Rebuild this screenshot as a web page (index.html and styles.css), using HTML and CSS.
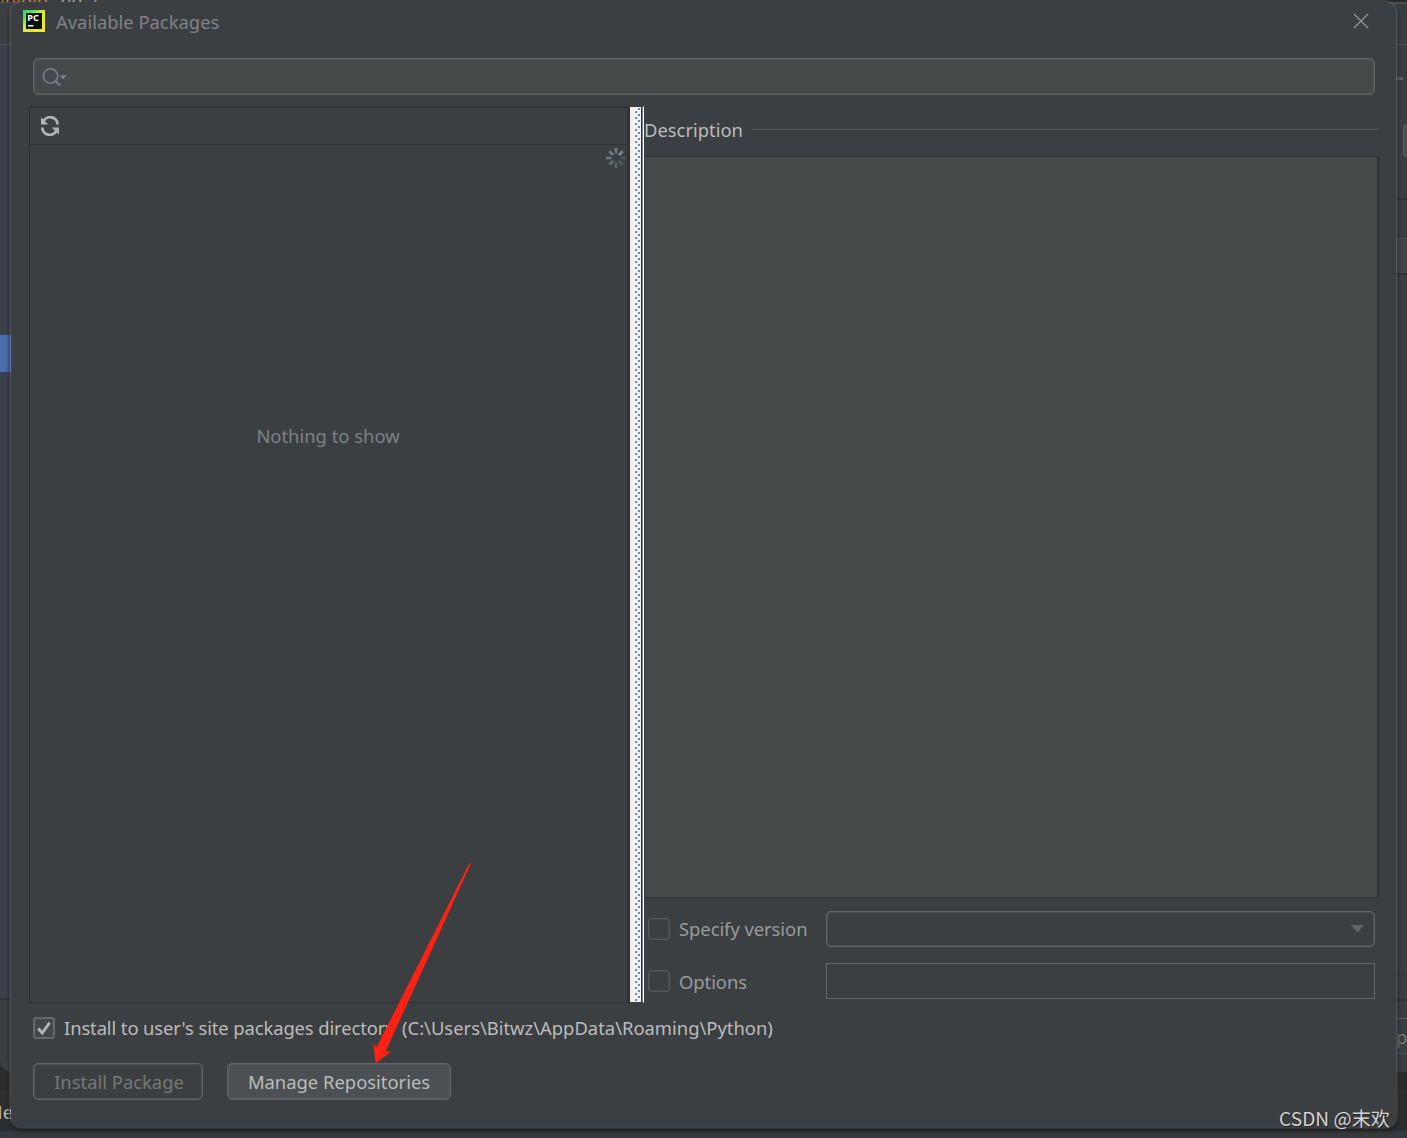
FILE: index.html
```html
<!DOCTYPE html>
<html lang="en">
<head>
    <meta charset="UTF-8">
    <meta name="viewport" content="width=device-width, initial-scale=1.0">
    <title>Available Packages</title>
    <link rel="stylesheet" href="styles.css">
</head>
<body>
    <!-- parent windows, only the edges are visible -->
    <div class="backdrop">
        <div class="back-top"><span class="code">ipipip</span><span class="code2">ng-7</span></div>
        <div class="back-left">
            <div class="tree"><div class="selected"></div></div>
        </div>
        <div class="back-right">
            <div class="seg seg-title"></div>
            <div class="seg seg-form"><i class="dash"></i><i class="stub"></i></div>
            <div class="seg seg-row"></div>
            <div class="seg seg-head"></div>
            <div class="seg seg-list"></div>
            <div class="seg seg-foot"></div>
            <div class="seg seg-apply"><span>p</span></div>
        </div>
        <div class="back-bottom"><span>He</span></div>
    </div>

    <div class="dialog">
        <div class="titlebar">
            <svg class="logo" width="22" height="22" viewBox="0 0 22 22">
                <defs>
                    <linearGradient id="pc" x1="0" y1="0" x2="0.7" y2="0.8">
                        <stop offset="0" stop-color="#21d789"/>
                        <stop offset="0.28" stop-color="#42e94b"/>
                        <stop offset="0.6" stop-color="#d6ec35"/>
                        <stop offset="1" stop-color="#f0e52c"/>
                    </linearGradient>
                </defs>
                <rect width="22" height="22" fill="url(#pc)"/>
                <rect x="3" y="3" width="16" height="16" fill="#07100b"/>
                <text x="4.3" y="11" textLength="11.5" lengthAdjust="spacingAndGlyphs" class="logo-text">PC</text>
                <rect x="5" y="15" width="5.5" height="1.5" fill="#fff"/>
            </svg>
            <span class="title">Available Packages</span>
            <svg class="close" width="16" height="16" viewBox="0 0 16 16"><path d="M1 1L15 15M15 1L1 15" stroke="#929597" stroke-width="1.3"/></svg>
        </div>

        <div class="search">
            <svg width="26" height="20" viewBox="0 0 26 20">
                <circle cx="8.5" cy="8" r="7.2" fill="none" stroke="#79838a" stroke-width="1.5"/>
                <path d="M13.2 12.7L18 17.5" stroke="#79838a" stroke-width="2"/>
                <path d="M17.6 7.3h7l-3.5 4z" fill="#79838a"/>
            </svg>
        </div>

        <div class="main">
            <div class="packages">
                <div class="toolbar">
                    <svg width="20" height="20" viewBox="0 0 20 20">
                        <path d="M3.2 6.2A7.4 7.4 0 0 1 17.6 8.5M16.8 13.8A7.4 7.4 0 0 1 2.4 11.5" fill="none" stroke="#afb1b3" stroke-width="2.9"/>
                        <path d="M1 1.2V8.5H8.3zM19 18.8V11.5H11.7z" fill="#afb1b3"/>
                    </svg>
                </div>
                <div class="list">
                    <svg class="spinner" width="20" height="20" viewBox="-10 -10 20 20" fill="#7f8b91">
                        <rect x="-1.3" y="-10" width="2.6" height="5.5" opacity=".78"/>
                        <rect x="-1.3" y="-9.5" width="2.6" height="5.5" transform="rotate(45)"/>
                        <rect x="-1.3" y="-10" width="2.6" height="5.5" transform="rotate(90)" opacity=".3"/>
                        <rect x="-1.3" y="-9.5" width="2.6" height="5.5" transform="rotate(135)" opacity=".4"/>
                        <rect x="-1.3" y="-10" width="2.6" height="5.5" transform="rotate(180)" opacity=".5"/>
                        <rect x="-1.3" y="-9.5" width="2.6" height="5.5" transform="rotate(225)" opacity=".62"/>
                        <rect x="-1.3" y="-10" width="2.6" height="5.5" transform="rotate(270)" opacity=".75"/>
                        <rect x="-1.3" y="-9.5" width="2.6" height="5.5" transform="rotate(315)" opacity=".8"/>
                    </svg>
                    <span class="empty">Nothing to show</span>
                </div>
            </div>
            <div class="splitter"></div>
            <div class="details">
                <div class="heading"><span>Description</span><div class="line"></div></div>
                <div class="description"></div>
                <div class="option">
                    <div class="check off"></div>
                    <span class="label">Specify version</span>
                    <div class="field combo"><svg width="13" height="8" viewBox="0 0 13 8"><path d="M0 0h13l-6.5 7.5z" fill="#626567"/></svg></div>
                </div>
                <div class="option">
                    <div class="check off"></div>
                    <span class="label opt">Options</span>
                    <div class="field"></div>
                </div>
            </div>
        </div>

        <div class="install">
            <div class="check on">
                <svg width="18" height="18" viewBox="0 0 18 18"><path d="M3.2 9.5L7.3 14L14.6 3.6" fill="none" stroke="#b3b5b6" stroke-width="2.8"/></svg>
            </div>
            <span class="install-a">Install to user's site packages directory</span>
            <span class="install-b">(C:\Users\Bitwz\AppData\Roaming\Python)</span>
        </div>

        <div class="buttons">
            <button class="button disabled" disabled>Install Package</button>
            <button class="button manage">Manage Repositories</button>
        </div>
    </div>

    <svg class="arrow" width="100" height="202" viewBox="0 0 100 202"><path d="M97.3 1.3L4.7 185.3L1.3 181.3L3.7 201.5L19.3 189.3L13.7 189L99 1.6z" fill="#ff2114"/></svg>
    <div class="watermark">CSDN @末欢</div>
</body>
</html>
```
FILE: styles.css
```css
*{
    box-sizing: border-box;
}
body{
    margin: 0;
    width: 1407px;
    height: 1138px;
    position: relative;
    overflow: hidden;
    background-color: #2b2c2d;
    color: #bbbbbb;
    font-family: "Noto Sans", "Open Sans", sans-serif;
    font-size: 18.4px;
    line-height: 24px;
    white-space: nowrap;
}
.backdrop{
    display: grid;
    grid-template-columns: 20px 1fr 20px;
    grid-template-rows: 2px 1070px 66px;
    height: 1138px;
}
.back-top{
    grid-column: 1 / 4;
    overflow: hidden;
    line-height: 2px;
    background-color: #2b2b2b;
}
.code{
    color: #b87436;
}
.code2{
    color: #999;
    margin-left: 12px;
}
.back-left{
    background-color: #3c3f41;
    border-top: 1px solid #505355;
    border-bottom-left-radius: 12px;
    padding-top: 41px;
}
.tree{
    height: 956px;
    background-color: #3c404b;
    border-top: 1px solid #4c5052;
    border-bottom: 2px solid #303234;
    padding-top: 290px;
}
.selected{
    height: 37px;
    background-color: #4b6eaf;
}
.back-right{
    grid-column: 3;
    background-color: #3a3e40;
}
.seg{
    border-bottom: 1px solid #4d5052;
}
.seg-title{
    height: 43px;
    border-top: 2px solid #4d5052;
}
.seg-form{
    height: 155px;
    border-bottom: 2px solid #2f3132;
    padding: 32px 0 0 9px;
}
.dash{
    display: block;
    width: 7px;
    height: 3px;
    background-color: #5c5e60;
}
.stub{
    display: block;
    width: 12px;
    height: 33px;
    margin: 44px 0 0 7px;
    border: 1px solid #5c5e60;
    border-radius: 4px;
    background-color: #4c5052;
}
.seg-row{
    height: 37px;
    border-bottom-color: #2f3132;
}
.seg-head{
    height: 38px;
    background-color: #434648;
    border-bottom: 2px solid #2f3132;
}
.seg-list{
    height: 700px;
    border-bottom-color: #303234;
}
.seg-foot{
    height: 26px;
    border-bottom: 2px solid #303234;
}
.seg-apply{
    height: 36px;
    margin-top: 17px;
    border-top: 1px solid #5c5e60;
    padding: 6px 0 0 9px;
    color: #777;
}
.back-bottom{
    grid-column: 1 / 4;
    margin-top: 20px;
    background-color: #2b2d2e;
    border-top: 1px solid #323435;
    border-bottom: 7px solid #36393b;
    padding: 7px 0 0;
}
.back-bottom span{
    margin-left: -11px;
}

/* dialog */
.dialog{
    position: absolute;
    left: 9px;
    top: 0;
    width: 1389px;
    height: 1129px;
    padding-top: 1px;
    background-color: #3c3f41;
    background-clip: padding-box;
    border: 2px solid rgba(255, 255, 255, 0.1);
    border-radius: 13px;
    display: flex;
    flex-direction: column;
    box-shadow: 0 2px 3px #202122;
}
.titlebar{
    height: 39px;
    display: flex;
    align-items: center;
    padding: 0 27px 0 12px;
}
.logo{
    margin-top: -3px;
}
.logo-text{
    font-size: 8.5px;
    font-weight: bold;
    fill: #fff;
}
.title{
    flex: 1;
    margin: -2px 0 0 11px;
    color: #808283;
}
.close{
    margin-top: -3px;
}
.search{
    height: 37px;
    margin: 16px 21px 0 22px;
    background-color: #45494a;
    border: 1px solid #616466;
    border-radius: 5px;
    box-shadow: inset 0 0 0 1px #525658;
    padding: 9px 8px;
}
.search svg{
    display: block;
}
.main{
    height: 897px;
    margin: 11px 17px 0 18px;
    display: flex;
}
.packages{
    width: 601px;
    border: 1px solid #323232;
    border-top-width: 2px;
    border-right-width: 3px;
    display: flex;
    flex-direction: column;
}
.toolbar{
    height: 37px;
    border-bottom: 1px solid #323232;
    padding: 8px 10px;
}
.list{
    flex: 1;
    display: flex;
    flex-direction: column;
    padding: 3px 1px 0 0;
}
.spinner{
    align-self: flex-end;
}
.empty{
    align-self: center;
    margin-top: 256px;
    color: #7e8081;
}
/* grip dots repeat every 6px down the bar */
.splitter{
    width: 14px;
    border-right: 1px solid #fff;
    border-top: 1px solid #3c3f41;
    border-bottom: 1px solid #3c3f41;
    background:
        linear-gradient(90deg, transparent 11px, #333638 11px 12px, #6f8397 12px),
        linear-gradient(transparent 4px, #778899 4px) 5px 0 / 2px 6px repeat-y,
        linear-gradient(transparent 1px, #778899 1px 3px, transparent 3px) 8px 0 / 2px 6px repeat-y,
        linear-gradient(transparent 3px, #fff 3px 4px, transparent 4px) 3px 0 / 3px 6px repeat-y,
        #f0f0f0;
}
.details{
    flex: 1;
    display: flex;
    flex-direction: column;
}
.heading{
    height: 50px;
    display: flex;
    align-items: center;
    padding-bottom: 2px;
}
.line{
    flex: 1;
    height: 1px;
    margin: -2px 0 0 9px;
    background-color: #515456;
}
.description{
    height: 742px;
    margin-left: 1px;
    background-color: #45494a;
    border: 1px solid #323232;
    border-left: 0;
    border-right-width: 2px;
}
.option{
    display: flex;
    align-items: center;
    height: 36px;
    margin: 13px 4px 0 4px;
}
.option + .option{
    margin-top: 16px;
}
.check{
    width: 22px;
    height: 22px;
    border: 2px solid #65686a;
    border-radius: 3px;
}
.off{
    border: 1px solid #55585a;
    box-shadow: inset 0 0 0 1px #474a4c;
}
.on{
    background-color: #43494a;
}
.on svg{
    display: block;
}
.label{
    width: 147px;
    margin-left: 9px;
    color: #999b9c;
    letter-spacing: -0.05px;
}
.opt{
    padding-top: 2px;
}
.field{
    flex: 1;
    height: 36px;
    border: 1px solid #646668;
}
.combo{
    border-radius: 5px;
    box-shadow: inset 0 0 0 1px #4b4e50;
    display: flex;
    align-items: center;
    justify-content: flex-end;
    padding-right: 10px;
}
.install{
    height: 24px;
    display: flex;
    align-items: center;
    margin: 13px 0 0 22px;
}
.install-a{
    margin-left: 9px;
    width: 338px;
    letter-spacing: -0.1px;
}
.buttons{
    display: flex;
    gap: 24px;
    margin: 23px 0 0 22px;
}
.button{
    width: 170px;
    height: 37px;
    padding: 0;
    border: 1px solid #616466;
    border-radius: 5px;
    box-shadow: inset 0 0 0 1px #505355;
    background-color: #4c5052;
    color: #bbbbbb;
    font: inherit;
}
.disabled{
    background-color: #3c3f41;
    color: #777777;
    padding-left: 2px;
}
.manage{
    width: 224px;
    box-shadow: inset 0 0 0 1px #565a5c;
}

.arrow{
    position: absolute;
    left: 372px;
    top: 862px;
}
.watermark{
    position: absolute;
    left: 1279px;
    top: 1106px;
    font-family: "Noto Sans CJK SC", sans-serif;
    font-size: 19.2px;
    color: #d2d2d2;
    text-shadow: 1px 1px 1px #222;
}
```
